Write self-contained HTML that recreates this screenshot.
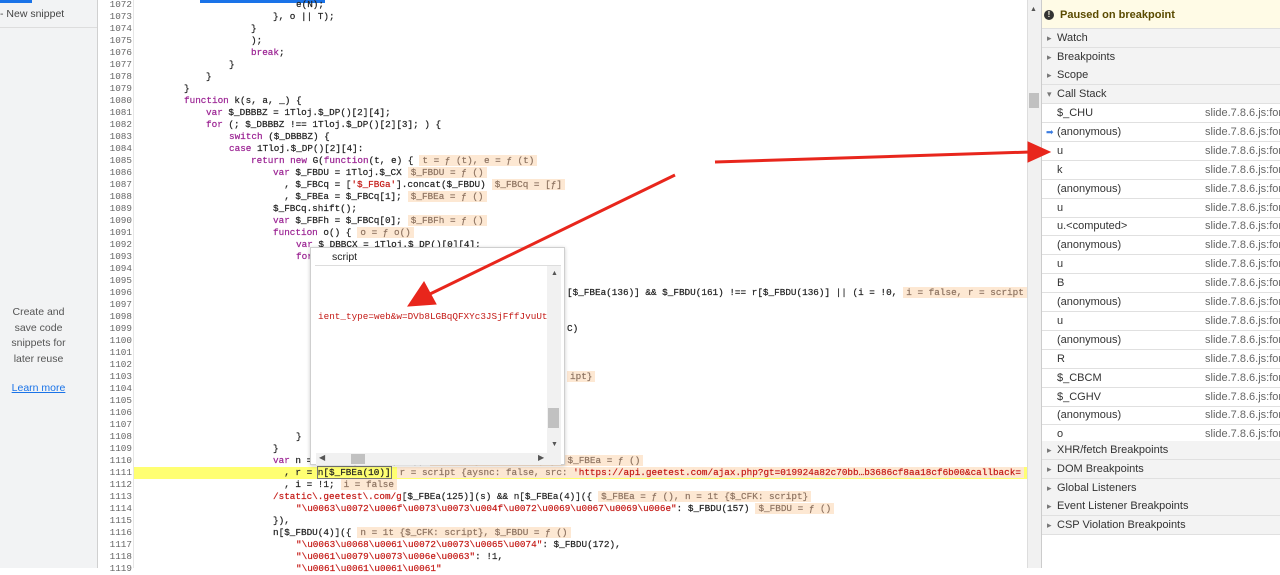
<!DOCTYPE html>
<html><head><meta charset="utf-8"><style>
*{margin:0;padding:0;box-sizing:border-box}
body{width:1280px;height:568px;overflow:hidden;background:#fff;font-family:"Liberation Sans",sans-serif;position:relative}
#left{position:absolute;left:0;top:0;width:98px;height:568px;background:#f2f3f4;border-right:1px solid #d0d0d0}
#gut{position:absolute;left:99px;top:0;width:35px;height:568px;background:#fff;border-right:1px solid #e6e6e6}
.ln{position:absolute;left:99px;width:33px;text-align:right;font:9.33px/12px "Liberation Mono",monospace;color:#666}
.c{position:absolute;font:9.33px/12px "Liberation Mono",monospace;color:#222;white-space:pre;-webkit-text-stroke:0.2px}
.k{color:#9b2393}.s{color:#c41a16}
.a{background:#fde8d3;color:#8e7462;padding:0 3px;margin-left:6px}
#hl{position:absolute;left:134px;top:467px;width:893px;height:12px;background:#ffff72}
#pop{position:absolute;left:310px;top:247px;width:255px;height:218px;background:#fff;border:1px solid #cfcfcf;box-shadow:0 1px 4px rgba(0,0,0,.2)}
#right{position:absolute;left:1041px;top:0;width:239px;height:568px;background:#fff;border-left:1px solid #ccc;font-size:11px;color:#333}
.row{position:absolute;left:0;width:239px;height:19px;line-height:18px;border-bottom:1px solid #e0e0e0;padding-left:15px;white-space:nowrap}
.sec{background:#f3f3f3}
.sec:before{content:"▸";position:absolute;left:5px;font-size:9px;color:#777}
.open:before{content:"▾"}
.f{position:absolute;left:163px;color:#666}
</style></head><body>
<div id="left">
<div style="position:absolute;left:0;top:8px;font-size:10.5px;color:#444">- New snippet</div>
<div style="position:absolute;left:0;top:27px;width:97px;border-top:1px solid #ddd"></div>
<div style="position:absolute;left:0;top:0;width:32px;height:3px;background:#1a73e8"></div>
<div style="position:absolute;left:0;top:305px;width:77px;text-align:center;font-size:10.5px;line-height:15.5px;color:#555">Create and<br>save code<br>snippets for<br>later reuse</div>
<div style="position:absolute;left:0;top:382px;width:77px;text-align:center;font-size:10.5px;color:#1a73e8;text-decoration:underline">Learn more</div>
</div>
<div id="gut"></div>
<div style="position:absolute;left:200px;top:0;width:125px;height:3px;background:#1a73e8"></div>
<div id="hl"></div>
<div id="lns"></div>
<div class="c" style="left:296px;top:-1px">e(N);</div>
<div class="c" style="left:273px;top:11px">}, o || T);</div>
<div class="c" style="left:251px;top:23px">}</div>
<div class="c" style="left:251px;top:35px">);</div>
<div class="c" style="left:251px;top:47px"><span class="k">break</span>;</div>
<div class="c" style="left:229px;top:59px">}</div>
<div class="c" style="left:206px;top:71px">}</div>
<div class="c" style="left:184px;top:83px">}</div>
<div class="c" style="left:184px;top:95px"><span class="k">function</span> k(s, a, _) {</div>
<div class="c" style="left:206px;top:107px"><span class="k">var</span> $_DBBBZ = 1Tloj.$_DP()[2][4];</div>
<div class="c" style="left:206px;top:119px"><span class="k">for</span> (; $_DBBBZ !== 1Tloj.$_DP()[2][3]; ) {</div>
<div class="c" style="left:229px;top:131px"><span class="k">switch</span> ($_DBBBZ) {</div>
<div class="c" style="left:229px;top:143px"><span class="k">case</span> 1Tloj.$_DP()[2][4]:</div>
<div class="c" style="left:251px;top:155px"><span class="k">return new</span> G(<span class="k">function</span>(t, e) {<span class="a">t = ƒ (t), e = ƒ (t)</span></div>
<div class="c" style="left:273px;top:167px"><span class="k">var</span> $_FBDU = 1Tloj.$_CX<span class="a">$_FBDU = ƒ ()</span></div>
<div class="c" style="left:273px;top:179px">  , $_FBCq = [<span class="s">'$_FBGa'</span>].concat($_FBDU)<span class="a">$_FBCq = [ƒ]</span></div>
<div class="c" style="left:273px;top:191px">  , $_FBEa = $_FBCq[1];<span class="a">$_FBEa = ƒ ()</span></div>
<div class="c" style="left:273px;top:203px">$_FBCq.shift();</div>
<div class="c" style="left:273px;top:215px"><span class="k">var</span> $_FBFh = $_FBCq[0];<span class="a">$_FBFh = ƒ ()</span></div>
<div class="c" style="left:273px;top:227px"><span class="k">function</span> o() {<span class="a">o = ƒ o()</span></div>
<div class="c" style="left:296px;top:239px"><span class="k">var</span> $_DBBCX = 1Tloj.$_DP()[0][4];</div>
<div class="c" style="left:296px;top:251px"><span class="k">for</span></div>
<div class="c" style="left:567px;top:287px">[$_FBEa(136)] &amp;&amp; $_FBDU(161) !== r[$_FBDU(136)] || (i = !0,<span class="a">i = false, r = script</span></div>
<div class="c" style="left:567px;top:323px">C)</div>
<div class="c" style="left:567px;top:371px"><span class="a" style="margin-left:0">ipt}</span></div>
<div class="c" style="left:296px;top:431px">}</div>
<div class="c" style="left:273px;top:443px">}</div>
<div class="c" style="left:273px;top:455px"><span class="k">var</span> n = <span class="k">new</span> i ($_FBEa(161))<span class="a">n = 1t {$_CFK: script}, $_FBEa = ƒ ()</span></div>
<div class="c" style="left:273px;top:467px">  , r = <span style="outline:1px solid #777">n[$_FBEa(10)]</span><span class="a">r = script {aysnc: false, src: <span class="s">'https://api.geetest.com/ajax.php?gt=019924a82c70bb…b3686cf8aa18cf6b00&amp;callback=</span></span></div>
<div class="c" style="left:273px;top:479px">  , i = !1;<span class="a">i = false</span></div>
<div class="c" style="left:273px;top:491px"><span class="s">/static\.geetest\.com/g</span>[$_FBEa(125)](s) &amp;&amp; n[$_FBEa(4)]({<span class="a">$_FBEa = ƒ (), n = 1t {$_CFK: script}</span></div>
<div class="c" style="left:296px;top:503px"><span class="s">"\u0063\u0072\u006f\u0073\u0073\u004f\u0072\u0069\u0067\u0069\u006e"</span>: $_FBDU(157)<span class="a">$_FBDU = ƒ ()</span></div>
<div class="c" style="left:273px;top:515px">}),</div>
<div class="c" style="left:273px;top:527px">n[$_FBDU(4)]({<span class="a">n = 1t {$_CFK: script}, $_FBDU = ƒ ()</span></div>
<div class="c" style="left:296px;top:539px"><span class="s">"\u0063\u0068\u0061\u0072\u0073\u0065\u0074"</span>: $_FBDU(172),</div>
<div class="c" style="left:296px;top:551px"><span class="s">"\u0061\u0079\u0073\u006e\u0063"</span>: !1,</div>
<div class="c" style="left:296px;top:563px"><span class="s">"\u0061\u0061\u0061\u0061"</span></div>
<script>
var h='';for(var n=1072;n<=1119;n++){h+='<div class="ln" style="top:'+((n-1072)*12-1)+'px">'+n+'</div>';}
document.getElementById('lns').innerHTML=h;
</script>
<div id="pop">
<div style="position:absolute;left:21px;top:3px;font-size:10.5px;color:#222">script</div>
<div style="position:absolute;left:4px;top:17px;width:246px;border-top:1px solid #ddd"></div>
<div style="position:absolute;left:7px;top:63px;font:9.33px/12px 'Liberation Mono',monospace;color:#c41a16;white-space:nowrap;width:229px;overflow:hidden">ient_type=web&amp;w=DVb8LGBqQFXYc3JSjFffJvuUt</div>
<div style="position:absolute;left:236px;top:18px;width:14px;height:188px;background:#f1f1f1"></div>
<div style="position:absolute;left:240px;top:22px;font-size:7px;color:#555">▲</div>
<div style="position:absolute;left:237px;top:160px;width:11px;height:20px;background:#c1c1c1"></div>
<div style="position:absolute;left:240px;top:193px;font-size:7px;color:#555">▼</div>
<div style="position:absolute;left:5px;top:205px;width:245px;height:12px;background:#f1f1f1"></div>
<div style="position:absolute;left:8px;top:205px;font-size:8px;color:#555">◀</div>
<div style="position:absolute;left:40px;top:206px;width:14px;height:10px;background:#c1c1c1"></div>
<div style="position:absolute;left:227px;top:205px;font-size:8px;color:#555">▶</div>
</div>
<div style="position:absolute;left:1027px;top:0;width:14px;height:568px;background:#f1f1f1;border-left:1px solid #ddd"></div>
<div style="position:absolute;left:1030px;top:6px;font-size:7px;color:#555">▲</div>
<div style="position:absolute;left:1029px;top:93px;width:10px;height:15px;background:#c1c1c1"></div>
<div id="right">
<div class="row" style="top:0;height:29px;line-height:30px;background:#fffbe6;font-weight:bold;color:#5a4a00;padding-left:18px"><span style="position:absolute;left:2px;top:10px;width:10px;height:10px;border-radius:50%;background:#333;color:#fffbe6;font-size:8px;line-height:10px;text-align:center">!</span>Paused on breakpoint</div>
<div class="row sec" style="top:29px">Watch</div>
<div class="row sec" style="top:48px">Breakpoints</div>
<div class="row sec" style="top:66px">Scope</div>
<div class="row sec open" style="top:85px">Call Stack</div>
<div id="cs"></div>
<div class="row sec" style="top:441px">XHR/fetch Breakpoints</div>
<div class="row sec" style="top:460px">DOM Breakpoints</div>
<div class="row sec" style="top:479px">Global Listeners</div>
<div class="row sec" style="top:497px">Event Listener Breakpoints</div>
<div class="row sec" style="top:516px">CSP Violation Breakpoints</div>
</div>
<script>
var items=['$_CHU','(anonymous)','u','k','(anonymous)','u','u.&lt;computed&gt;','(anonymous)','u','B','(anonymous)','u','(anonymous)','R','$_CBCM','$_CGHV','(anonymous)','o'];
var h2='';for(var i=0;i<items.length;i++){h2+='<div class="row" style="top:'+(104+i*18.9)+'px">'+(i==1?'<span style="position:absolute;left:4px;color:#3a7be0;font-size:9px">➡</span>':'')+items[i]+'<span class="f">slide.7.8.6.js:form</span></div>';}
document.getElementById('cs').innerHTML=h2;
</script>
<svg style="position:absolute;left:0;top:0" width="1280" height="568">
<g fill="#e8261c" stroke="#e8261c">
<line x1="675" y1="175" x2="430" y2="294" stroke-width="3"/>
<polygon points="408,306 424,282 436,304" stroke-width="1"/>
<line x1="715" y1="162" x2="1030" y2="152" stroke-width="3"/>
<polygon points="1050,152 1028,142 1028,162" stroke-width="1"/>
</g>
</svg>
</body></html>
